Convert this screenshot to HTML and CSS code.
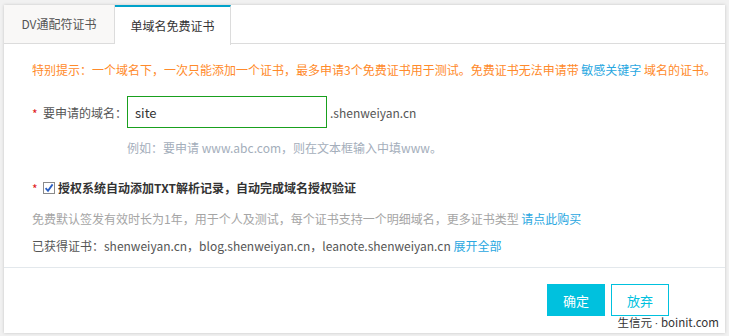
FILE: index.html
```html
<!DOCTYPE html>
<html>
<head>
    <title>申请免费证书</title>
    <meta charset="utf-8">
    <link rel="stylesheet" href="styles.css">
</head>
<body>
    <div class="card">
        <div class="tabs">
            <div class="tab">DV通配符证书</div>
            <div class="tab active">单域名免费证书</div>
        </div>
        <div class="content">
            <p class="notice">特别提示：一个域名下，一次只能添加一个证书，最多申请3个免费证书用于测试。免费证书无法申请带 <a class="link">敏感关键字</a> 域名的证书。</p>
            <div class="field">
                <span class="star">*</span>
                <label class="label">要申请的域名：</label>
                <input class="input" type="text" value="site">
                <span class="suffix">.shenweiyan.cn</span>
            </div>
            <p class="hint">例如：要申请 www.abc.com，则在文本框输入中填www。</p>
            <div class="check-row">
                <span class="star">*</span>
                <span class="checkbox">
                    <svg width="12" height="12" viewBox="0 0 12 12">
                        <rect x="0.5" y="0.5" width="11" height="11" fill="#fff" stroke="#8a8a8a"/>
                        <path d="M2.6 6.2 L5 8.8 L9.6 2.4" fill="none" stroke="#2a5fc4" stroke-width="1.8"/>
                    </svg>
                </span>
                <strong class="check-label">授权系统自动添加TXT解析记录，自动完成域名授权验证</strong>
            </div>
            <p class="desc">免费默认签发有效时长为1年，用于个人及测试，每个证书支持一个明细域名，更多证书类型 <a class="link">请点此购买</a></p>
            <p class="owned">已获得证书：shenweiyan.cn，blog.shenweiyan.cn，leanote.shenweiyan.cn <a class="link">展开全部</a></p>
        </div>
        <div class="footer">
            <button class="btn btn-primary">确定</button>
            <button class="btn btn-outline">放弃</button>
        </div>
        <div class="watermark">生信元 <span class="dot">·</span> boinit.com</div>
    </div>
</body>
</html>
```

FILE: styles.css
```css
body {
    font-family: "Noto Sans CJK SC", "Noto Sans", sans-serif;
    font-size: 12px;
    margin: 0;
    padding: 5px 4px 3px 4px;
    background-color: #f1f1f1;
}
.card {
    position: relative;
    background: white;
    height: 328px;
    box-shadow: 0 0 3px rgba(0, 0, 0, 0.18);
}
.tabs {
    display: flex;
    height: 38px;
    border-bottom: 1px solid #dcdcdc;
}
.tab {
    width: 110px;
    line-height: 38px;
    text-align: center;
    color: #555;
    background: #f9f8f7;
    border-right: 1px solid #dcdcdc;
}
.tab.active {
    width: 115px;
    color: #333;
    background: white;
    border-top: 2px solid #00a2ca;
    line-height: 37px;
    height: 37px;
    margin-bottom: -1px;
    padding-bottom: 1px;
}
.content {
    padding: 16px 28px 0 28px;
    border-bottom: 1px solid #e3e8ec;
    height: 207px;
}
p {
    margin: 0;
    line-height: 20px;
}
.notice {
    color: #ff8a2a;
    white-space: nowrap;
}
.link {
    color: #29a7e1;
    text-decoration: none;
    cursor: pointer;
}
.field {
    display: flex;
    align-items: center;
    margin-top: 16px;
    height: 32px;
}
.star {
    color: #e02020;
    width: 11px;
    padding-top: 3px;
}
.label {
    color: #555;
    width: 84px;
}
.input {
    box-sizing: border-box;
    width: 200px;
    height: 32px;
    border: 1px solid #19a01e;
    padding: 0 7px;
    font-family: inherit;
    font-size: 13px;
    color: #333;
    outline: none;
}
.suffix {
    color: #555;
    margin-left: 3px;
}
.hint {
    color: #a4aebb;
    margin-top: 10px;
    padding-left: 95px;
}
.check-row {
    display: flex;
    align-items: center;
    margin-top: 18px;
    line-height: 20px;
}
.checkbox {
    display: flex;
    margin-right: 3px;
}
.check-label {
    color: #333;
    font-weight: bold;
}
.desc {
    color: #a5a5a5;
    margin-top: 10px;
}
.owned {
    color: #555;
    margin-top: 7px;
}
.footer {
    display: flex;
    justify-content: flex-end;
    gap: 6px;
    padding: 16px 56px 0 0;
}
.btn {
    width: 58px;
    height: 32px;
    font-family: inherit;
    font-size: 13px;
    cursor: pointer;
}
.btn-primary {
    background: #00c1de;
    color: white;
    border: none;
}
.btn-outline {
    background: white;
    color: #00c1de;
    border: 1px solid #00c1de;
}
.watermark {
    position: absolute;
    right: 6px;
    bottom: 3px;
    font-size: 11.5px;
    color: #333;
}
.dot {
    font-family: "Liberation Sans", sans-serif;
}
```
